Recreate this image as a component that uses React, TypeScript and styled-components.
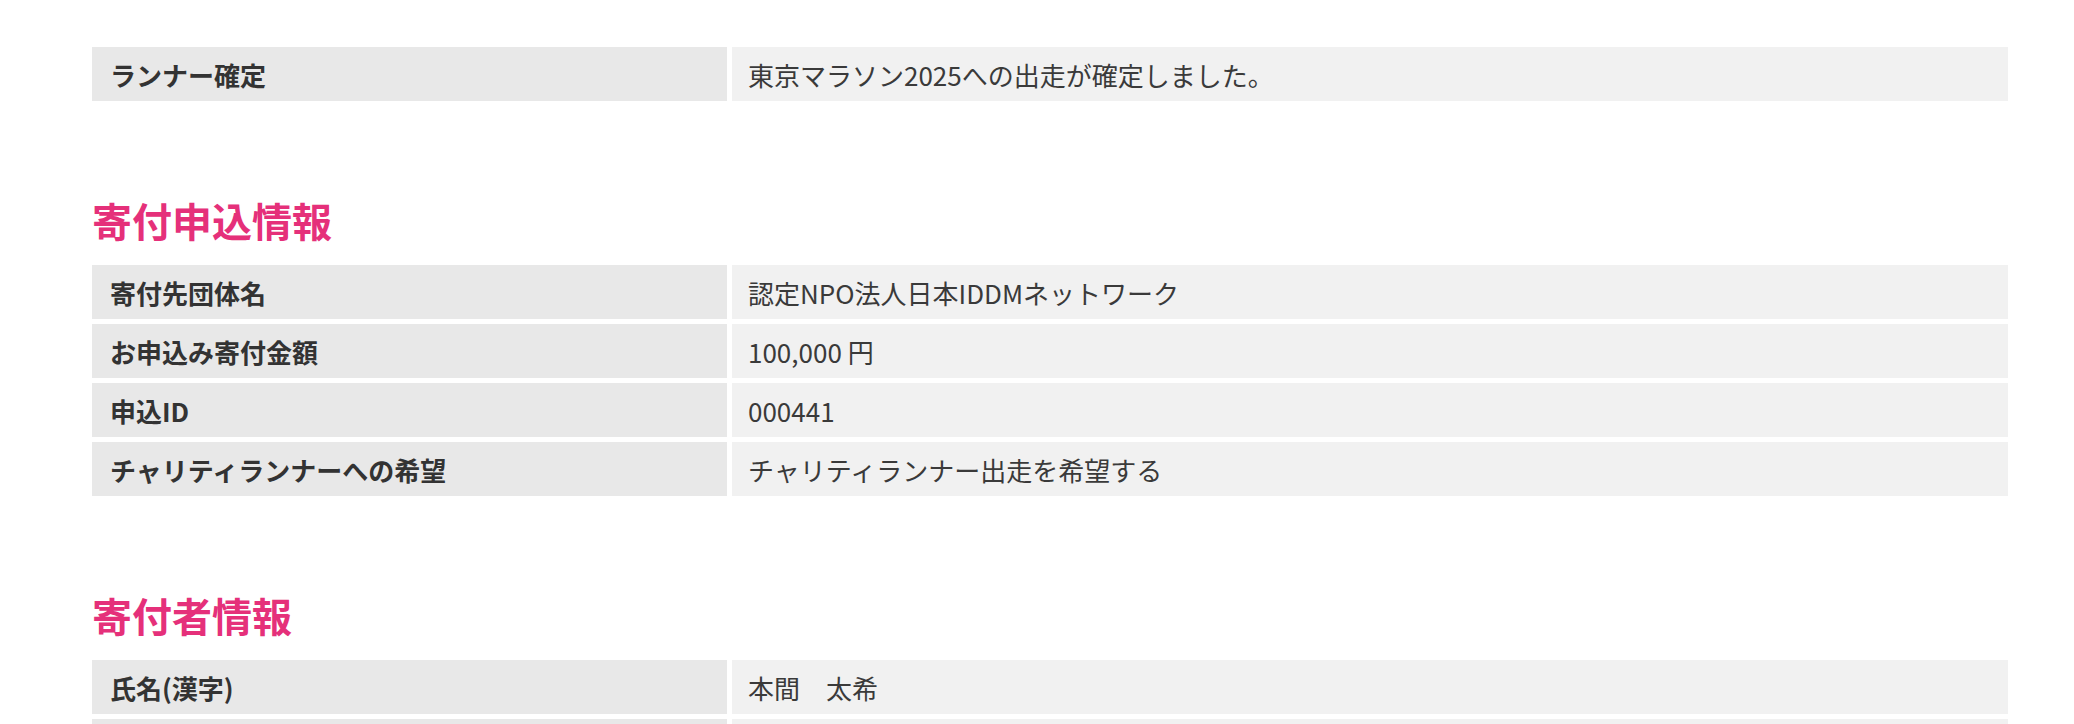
import React from "react";
import styled, { createGlobalStyle } from "styled-components";

const GlobalStyle = createGlobalStyle`
  html, body {
    margin: 0;
    padding: 0;
    background: #ffffff;
  }
  body {
    font-family: "Noto Sans CJK JP", "Noto Sans", sans-serif;
    color: #333333;
  }
`;

interface Row {
  label: string;
  value: string;
}

interface Section {
  title?: string;
  rows: Row[];
}

const sections: Section[] = [
  {
    rows: [
      { label: "ランナー確定", value: "東京マラソン2025への出走が確定しました。" },
    ],
  },
  {
    title: "寄付申込情報",
    rows: [
      { label: "寄付先団体名", value: "認定NPO法人日本IDDMネットワーク" },
      { label: "お申込み寄付金額", value: "100,000 円" },
      { label: "申込ID", value: "000441" },
      { label: "チャリティランナーへの希望", value: "チャリティランナー出走を希望する" },
    ],
  },
  {
    title: "寄付者情報",
    rows: [
      { label: "氏名(漢字)", value: "本間　太希" },
      { label: "氏名(カナ)", value: "ホンマ　タイキ" },
    ],
  },
];

const Page = styled.div`
  padding: 47px 0 0 92px;
  width: 1916px;
`;

const Block = styled.section<{ $first?: boolean }>`
  margin-top: ${(p) => (p.$first ? "0" : "95px")};
`;

const Heading = styled.h2`
  margin: 0 0 21px 0;
  font-size: 40px;
  line-height: 48px;
  font-weight: 700;
  color: #e5307a;
`;

const Table = styled.div`
  display: grid;
  grid-template-columns: 635px 1fr;
  column-gap: 5px;
  row-gap: 5px;
`;

const Cell = styled.div<{ $head?: boolean }>`
  height: 54px;
  display: flex;
  align-items: center;
  padding-left: ${(p) => (p.$head ? "18px" : "16px")};
  background: ${(p) => (p.$head ? "#e8e8e8" : "#f1f1f1")};
  font-size: 26px;
  font-weight: ${(p) => (p.$head ? 700 : 400)};
  color: ${(p) => (p.$head ? "#333333" : "#3a3a3a")};
  white-space: nowrap;
`;

export default function App() {
  return (
    <>
      <GlobalStyle />
      <Page>
        {sections.map((s, i) => (
          <Block key={i} $first={i === 0}>
            {s.title && <Heading>{s.title}</Heading>}
            <Table>
              {s.rows.map((r) => (
                <React.Fragment key={r.label}>
                  <Cell $head>{r.label}</Cell>
                  <Cell>{r.value}</Cell>
                </React.Fragment>
              ))}
            </Table>
          </Block>
        ))}
      </Page>
    </>
  );
}
